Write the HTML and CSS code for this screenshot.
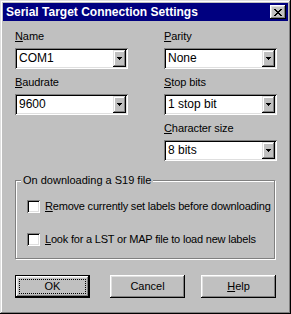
FILE: index.html
```html
<!DOCTYPE html>
<html>
<head>
<meta charset="utf-8">
<link rel="stylesheet" href="styles.css">
</head>
<body>
<div class="window">
  <div class="titlebar">
    <span class="title">Serial Target Connection Settings</span>
    <div class="close">
      <svg width="8" height="7" viewBox="0 0 8 7" shape-rendering="crispEdges"><path d="M0 0h2v1h-2zM6 0h2v1h-2zM1 1h2v1h-2zM5 1h2v1h-2zM2 2h4v1h-4zM3 3h2v1h-2zM2 4h4v1h-4zM1 5h2v1h-2zM5 5h2v1h-2zM0 6h2v1h-2zM6 6h2v1h-2z" fill="#000"/></svg>
    </div>
  </div>
  <div class="content">
    <div class="fields">
      <div class="col">
        <div class="field">
          <div class="label"><u>N</u>ame</div>
          <div class="combo"><span class="value">COM1</span><span class="drop"><svg width="5" height="3" viewBox="0 0 5 3" shape-rendering="crispEdges"><path d="M0 0h5v1h-5zM1 1h3v1h-3zM2 2h1v1h-1z" fill="#000"/></svg></span></div>
        </div>
        <div class="field">
          <div class="label"><u>B</u>audrate</div>
          <div class="combo"><span class="value">9600</span><span class="drop"><svg width="5" height="3" viewBox="0 0 5 3" shape-rendering="crispEdges"><path d="M0 0h5v1h-5zM1 1h3v1h-3zM2 2h1v1h-1z" fill="#000"/></svg></span></div>
        </div>
      </div>
      <div class="col">
        <div class="field">
          <div class="label"><u>P</u>arity</div>
          <div class="combo"><span class="value">None</span><span class="drop"><svg width="5" height="3" viewBox="0 0 5 3" shape-rendering="crispEdges"><path d="M0 0h5v1h-5zM1 1h3v1h-3zM2 2h1v1h-1z" fill="#000"/></svg></span></div>
        </div>
        <div class="field">
          <div class="label"><u>S</u>top bits</div>
          <div class="combo"><span class="value">1 stop bit</span><span class="drop"><svg width="5" height="3" viewBox="0 0 5 3" shape-rendering="crispEdges"><path d="M0 0h5v1h-5zM1 1h3v1h-3zM2 2h1v1h-1z" fill="#000"/></svg></span></div>
        </div>
        <div class="field">
          <div class="label"><u>C</u>haracter size</div>
          <div class="combo"><span class="value">8 bits</span><span class="drop"><svg width="5" height="3" viewBox="0 0 5 3" shape-rendering="crispEdges"><path d="M0 0h5v1h-5zM1 1h3v1h-3zM2 2h1v1h-1z" fill="#000"/></svg></span></div>
        </div>
      </div>
    </div>
    <div class="group">
      <span class="legend">On downloading a S19 file</span>
      <div class="check"><span class="box"></span><span class="text"><u>R</u>emove currently set labels before downloading</span></div>
      <div class="check"><span class="box"></span><span class="text"><u>L</u>ook for a LST or MAP file to load new labels</span></div>
    </div>
    <div class="buttons">
      <div class="btn default"><span class="focus">OK</span></div>
      <div class="btn cancel"><span class="cap">Cancel</span></div>
      <div class="btn help"><span class="cap"><u>H</u>elp</span></div>
    </div>
  </div>
</div>
</body>
</html>
```
FILE: styles.css
```css
html, body {
  margin: 0;
  padding: 0;
  background: #c0c0c0;
}
body {
  font-family: "Liberation Sans", Arial, sans-serif;
  font-size: 11px;
  color: #000;
}
.window {
  width: 291px;
  height: 314px;
  box-sizing: border-box;
  padding: 3px;
  background: #c0c0c0;
  box-shadow: inset -1px -1px #000, inset 1px 1px #dfdfdf, inset -2px -2px #808080, inset 2px 2px #fff;
}
.titlebar {
  height: 18px;
  background: #000080;
  display: flex;
  align-items: center;
  justify-content: space-between;
  padding: 0 2px 0 3px;
}
.title {
  color: #fff;
  font-weight: bold;
  font-size: 12px;
  line-height: 18px;
  white-space: nowrap;
}
.close {
  width: 16px;
  height: 14px;
  background: #c0c0c0;
  box-shadow: inset -1px -1px #000, inset 1px 1px #fff, inset -2px -2px #808080, inset 2px 2px #dfdfdf;
  display: flex;
  align-items: center;
  justify-content: center;
  padding-right: 1px;
  box-sizing: border-box;
}
.close svg { display: block; }
.content {
  padding: 9px 12px 0 12px;
}
.fields {
  display: grid;
  grid-template-columns: 113px 113px;
  column-gap: 36px;
}
.col {
  display: flex;
  flex-direction: column;
  gap: 7px;
}
.label {
  line-height: 13px;
  height: 13px;
  margin-bottom: 5px;
  white-space: nowrap;
  letter-spacing: -0.1px;
}
.combo {
  height: 21px;
  box-sizing: border-box;
  background: #fff;
  box-shadow: inset 1px 1px #808080, inset -1px -1px #fff, inset 2px 2px #000, inset -2px -2px #dfdfdf;
  display: flex;
  align-items: center;
  padding: 2px;
}
.value {
  flex: 1;
  font-size: 12px;
  line-height: 17px;
  padding-left: 2px;
  white-space: nowrap;
}
.drop {
  width: 13px;
  height: 17px;
  box-sizing: border-box;
  background: #c0c0c0;
  box-shadow: inset -1px -1px #000, inset 1px 1px #dfdfdf, inset -2px -2px #808080, inset 2px 2px #fff;
  display: flex;
  align-items: center;
  justify-content: center;
  padding-right: 1px;
}
.drop svg { display: block; }
.group {
  position: relative;
  width: 260px;
  box-sizing: border-box;
  margin-top: 19px;
  border: 1px solid #808080;
  box-shadow: inset 1px 1px #fff, 1px 1px #fff;
  padding: 19px 0 12px 11px;
  display: flex;
  flex-direction: column;
  gap: 20px;
}
.legend {
  position: absolute;
  top: -7px;
  left: 5px;
  padding: 0 2px;
  background: #c0c0c0;
  line-height: 13px;
  white-space: nowrap;
}
.check {
  display: flex;
  align-items: center;
  height: 13px;
}
.box {
  width: 13px;
  height: 13px;
  box-sizing: border-box;
  background: #fff;
  box-shadow: inset 1px 1px #808080, inset -1px -1px #fff, inset 2px 2px #000, inset -2px -2px #dfdfdf;
  margin-right: 5px;
  flex: none;
}
.text {
  line-height: 13px;
  white-space: nowrap;
  letter-spacing: -0.2px;
}
.buttons {
  display: flex;
  margin-top: 16px;
  width: 261px;
}
.btn {
  width: 75px;
  height: 23px;
  box-sizing: border-box;
  background: #c0c0c0;
  box-shadow: inset -1px -1px #000, inset 1px 1px #fff, inset -2px -2px #808080, inset 2px 2px #dfdfdf;
  display: flex;
  align-items: center;
  justify-content: center;
}
.btn.default {
  box-shadow: inset 0 0 0 1px #000, inset -2px -2px #000, inset 2px 2px #fff, inset -3px -3px #808080, inset 3px 3px #dfdfdf;
  padding: 4px;
}
.btn.cancel { margin-left: 20px; }
.btn.help { margin-left: auto; }
.focus {
  flex: 1;
  align-self: stretch;
  border: 1px dotted #000;
  display: flex;
  align-items: center;
  justify-content: center;
  line-height: 13px;
}
.cap { line-height: 13px; }
```
